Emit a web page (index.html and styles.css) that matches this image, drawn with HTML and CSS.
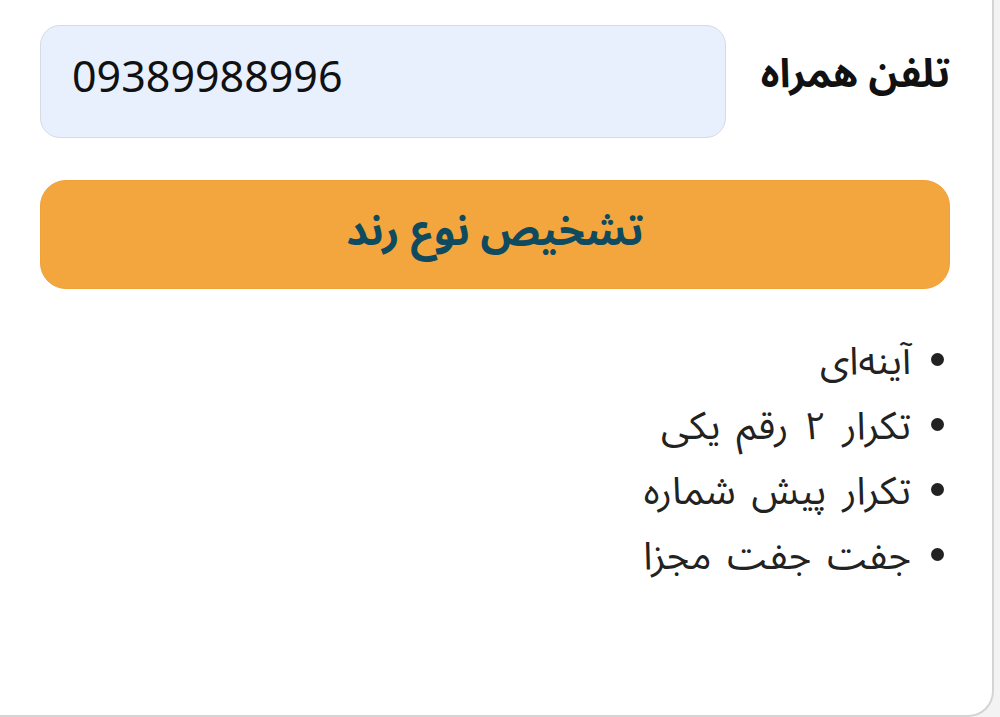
FILE: index.html
```html
<!DOCTYPE html>
<html lang="fa" dir="rtl">
<head>
<meta charset="utf-8">
<link rel="stylesheet" href="styles.css">
</head>
<body>
<div class="card">
  <div class="row">
    <label class="label">تلفن همراه</label>
    <div class="input" dir="ltr">09389988996</div>
  </div>
  <button class="btn">تشخیص نوع رند</button>
  <ul class="list">
    <li>آینه‌ای</li>
    <li>تکرار ۲ رقم یکی</li>
    <li>تکرار پیش شماره</li>
    <li>جفت جفت مجزا</li>
  </ul>
</div>
</body>
</html>
```

FILE: styles.css
```css
html, body {
  margin: 0;
  padding: 0;
  background: #f3f3f3;
  height: 717px;
  overflow: hidden;
}
body {
  font-family: "Noto Sans Arabic", "Noto Sans", sans-serif;
}
.card {
  box-sizing: border-box;
  width: 1024px;
  height: 757px;
  margin: -40px 6px 0 0;
  background: #ffffff;
  border-right: 2px solid #d4d4d4;
  border-bottom: 2px solid #d4d4d4;
  border-bottom-right-radius: 26px;
  padding: 65px 42px 0 70px;
}
.row {
  display: flex;
  align-items: center;
  gap: 30px;
}
.label {
  font-size: 40px;
  font-weight: bold;
  color: #111;
  white-space: nowrap;
  flex: 1;
  text-align: right;
  padding-bottom: 14px;
}
.input {
  box-sizing: border-box;
  width: 686px;
  height: 113px;
  background: #e8f0fe;
  border: 1.5px solid #d5dbe3;
  border-radius: 20px;
  font-family: "Noto Sans", sans-serif;
  font-size: 43px;
  color: #111;
  display: flex;
  align-items: center;
  padding: 0 0 12px 31px;
}
.btn {
  display: block;
  box-sizing: border-box;
  width: 910px;
  height: 109px;
  margin-top: 42px;
  padding-bottom: 8px;
  background: #f4a63e;
  border: 1px solid #f0a23a;
  border-radius: 26px;
  color: #0f4a5e;
  font-family: "Noto Sans Arabic", sans-serif;
  font-size: 42px;
  font-weight: bold;
}
.list {
  list-style: none;
  margin: 40px 0 0 0;
  padding: 0 6px 0 0;
  font-size: 38.5px;
  line-height: 65px;
  word-spacing: 6px;
  color: #222;
}
.list li {
  display: flex;
  align-items: center;
}
.list li::before {
  content: "";
  flex: none;
  width: 13px;
  height: 13px;
  border-radius: 50%;
  background: #222;
  margin-left: 20px;
  margin-bottom: 4px;
}
```
